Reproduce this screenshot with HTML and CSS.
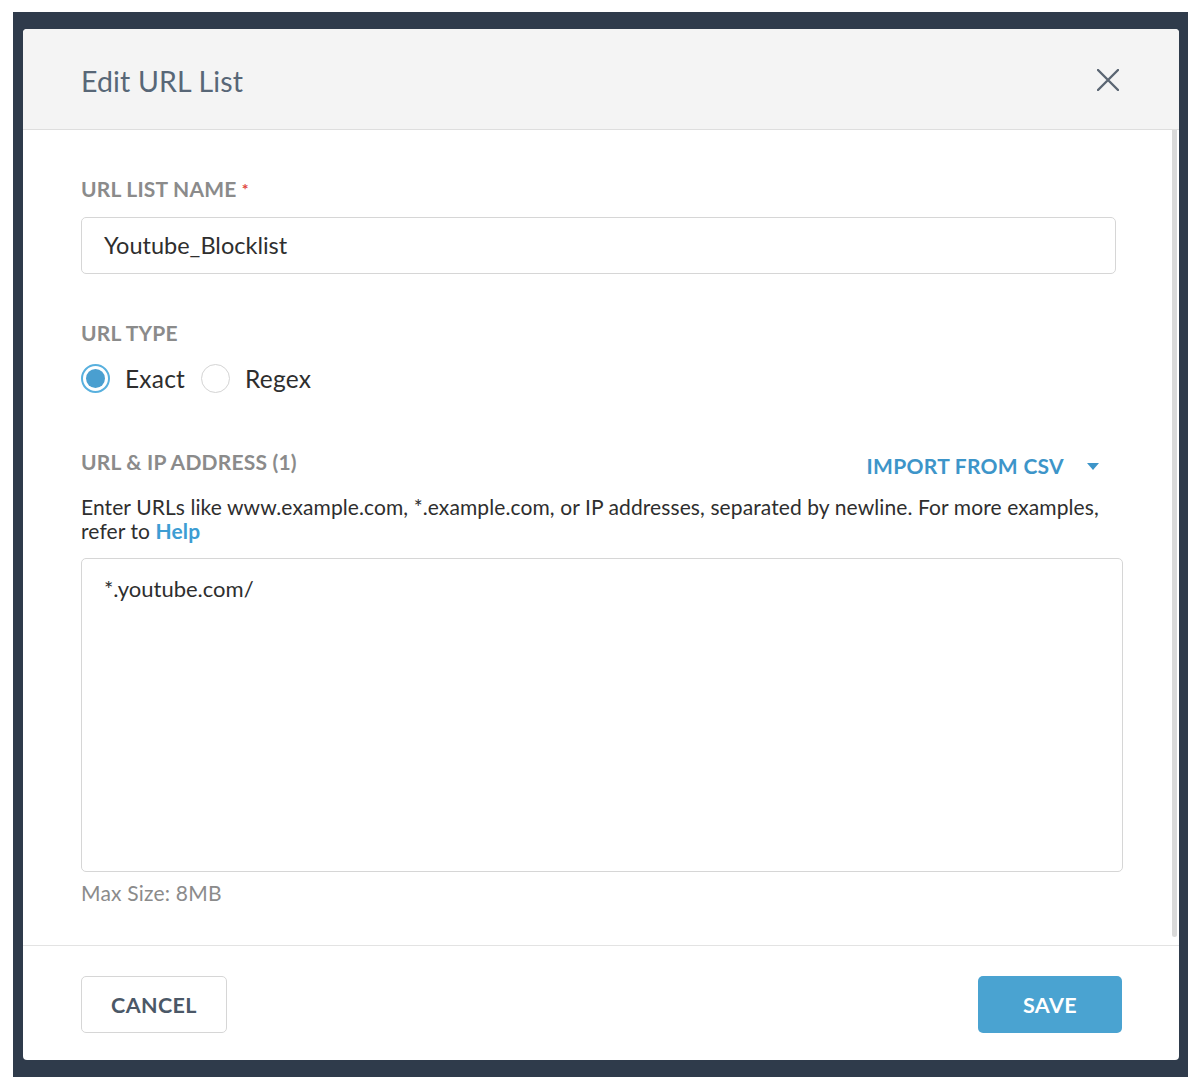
FILE: index.html
```html
<!DOCTYPE html>
<html lang="en">
<head>
<meta charset="utf-8">
<title>Edit URL List</title>
<link rel="stylesheet" href="styles.css">
</head>
<body>
<div class="backdrop">
  <div class="modal">
    <div class="modal-header">
      <h1 class="modal-title">Edit URL List</h1>
      <button class="close-btn" aria-label="Close">
        <svg width="22" height="22" viewBox="0 0 22 22"><path d="M1 1 L21 21 M21 1 L1 21" stroke="#5b6673" stroke-width="2.4" stroke-linecap="round" fill="none"/></svg>
      </button>
    </div>
    <div class="modal-body">
      <div class="body-content">
        <div class="field-label label-first">URL LIST NAME <span class="req">*</span></div>
        <div class="text-input">Youtube_Blocklist</div>

        <div class="field-label label-type">URL TYPE</div>
        <div class="radio-row">
          <span class="radio checked"><span class="dot"></span></span>
          <span class="radio-text">Exact</span>
          <span class="radio"></span>
          <span class="radio-text">Regex</span>
        </div>

        <div class="addr-row">
          <div class="field-label">URL &amp; IP ADDRESS (1)</div>
          <div class="import">IMPORT FROM CSV
            <svg class="caret" width="12" height="7" viewBox="0 0 12 7"><path d="M0 0 H12 L6 7 Z" fill="#3d95c9"/></svg>
          </div>
        </div>
        <p class="help">Enter URLs like www.example.com, *.example.com, or IP addresses, separated by newline. For more examples, refer to <a class="help-link">Help</a></p>
        <div class="textarea">*.youtube.com/</div>
        <div class="max-size">Max Size: 8MB</div>
      </div>
      <div class="scrollbar"></div>
    </div>
    <div class="modal-footer">
      <button class="btn btn-cancel">CANCEL</button>
      <button class="btn btn-save">SAVE</button>
    </div>
  </div>
</div>
</body>
</html>
```
FILE: styles.css
```css
* { box-sizing: border-box; }
html, body { margin: 0; padding: 0; background: #ffffff; }
body {
  font-family: Lato, "Open Sans", Arial, sans-serif;
  color: #333333;
  padding: 12px 10px 13px 13px;
}
.backdrop {
  background: #2f3b4b;
  width: 1175px;
  height: 1065px;
  padding: 17px 9px 17px 10px;
}
.modal {
  background: #ffffff;
  border-radius: 4px;
  width: 1156px;
  height: 1031px;
  overflow: hidden;
  display: flex;
  flex-direction: column;
}
.modal-header {
  height: 101px;
  flex: none;
  background: #f4f4f4;
  border-bottom: 1px solid #dedede;
  display: flex;
  align-items: center;
  justify-content: space-between;
  padding: 0 60px 0 58px;
}
.modal-title {
  margin: 0;
  font-weight: 400;
  font-size: 28.5px;
  letter-spacing: 0.15px;
  color: #586777;
  line-height: 34px;
  padding-top: 3px;
}
.close-btn {
  background: none;
  border: 0;
  padding: 0;
  width: 22px;
  height: 22px;
  display: flex;
  margin-top: 1px;
}
.modal-body {
  flex: 1;
  display: flex;
  min-height: 0;
}
.body-content {
  flex: 1;
  padding: 47px 0 0 58px;
}
.scrollbar {
  width: 5px;
  margin: 0 2px 8px 0;
  background: #d9d9d9;
  border-radius: 0 0 3px 3px;
}
.field-label {
  font-size: 21px;
  line-height: 24px;
  font-weight: 700;
  color: #8b8b8b;
  letter-spacing: 0.2px;
}
.req { color: #e0453c; font-size: 16px; vertical-align: top; }
.text-input {
  margin-top: 16px;
  width: 1035px;
  height: 57px;
  border: 1px solid #d6d6d6;
  border-radius: 5px;
  padding: 0 22px;
  font-size: 23.5px;
  line-height: 55px;
  color: #2e2e2e;
}
.label-type { margin-top: 47px; }
.radio-row {
  margin-top: 19px;
  display: flex;
  align-items: center;
  height: 29px;
}
.radio {
  width: 29px;
  height: 29px;
  border-radius: 50%;
  border: 1px solid #d4d4d4;
  display: flex;
  align-items: center;
  justify-content: center;
  flex: none;
}
.radio.checked { border: 2px solid #58b0de; }
.radio .dot {
  width: 19px;
  height: 19px;
  border-radius: 50%;
  background: #4a9fd0;
}
.radio-text {
  font-size: 24.5px;
  letter-spacing: 0.2px;
  color: #2e2e2e;
  margin: 0 16px 0 15px;
}
.addr-row {
  margin-top: 57px;
  width: 1018px;
  display: flex;
  justify-content: space-between;
  align-items: flex-end;
}
.import {
  font-size: 21px;
  font-weight: 700;
  color: #3d95c9;
  line-height: 24px;
  letter-spacing: 0.3px;
  display: flex;
  align-items: center;
  transform: translateY(4px);
}
.caret { margin-left: 23px; }
.help {
  margin: 21px 0 0 0;
  width: 1042px;
  font-size: 21px;
  line-height: 24px;
  color: #2e2e2e;
  letter-spacing: 0.1px;
}
.help-link { color: #3d9dd3; font-weight: 700; }
.textarea {
  margin-top: 15px;
  width: 1042px;
  height: 314px;
  border: 1px solid #d6d6d6;
  border-radius: 5px;
  padding: 18px 22px;
  font-size: 22px;
  line-height: 24px;
  color: #2e2e2e;
}
.max-size {
  margin-top: 9px;
  font-size: 21px;
  letter-spacing: 0.2px;
  line-height: 24px;
  color: #8b8b8b;
}
.modal-footer {
  flex: none;
  height: 115px;
  border-top: 1px solid #e3e3e3;
  display: flex;
  justify-content: space-between;
  align-items: flex-start;
  padding: 30px 57px 0 58px;
}
.btn {
  height: 57px;
  border-radius: 5px;
  font-family: Lato, "Open Sans", Arial, sans-serif;
  font-size: 21.5px;
  font-weight: 700;
  letter-spacing: 0.4px;
}
.btn-cancel {
  width: 146px;
  background: #ffffff;
  border: 1px solid #d6d6d6;
  color: #4b5867;
}
.btn-save {
  width: 144px;
  background: #4aa3d1;
  border: 0;
  color: #ffffff;
}
```
